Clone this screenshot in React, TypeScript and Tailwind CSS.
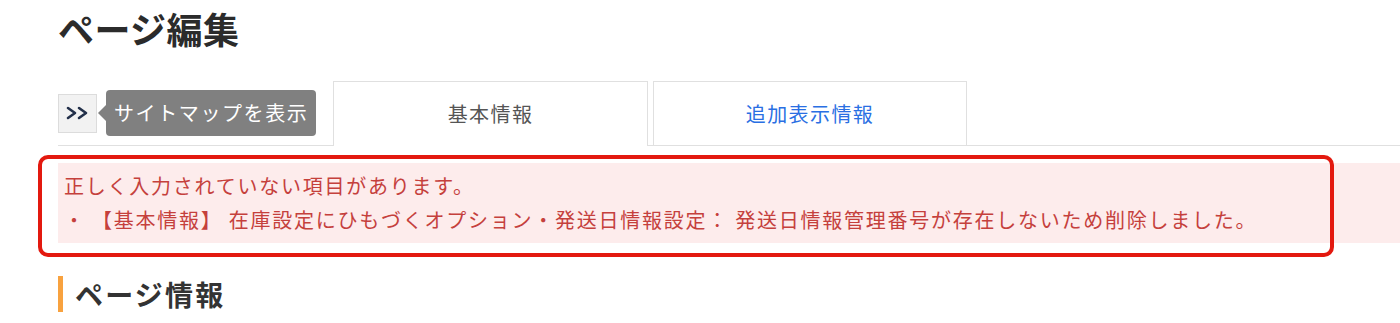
import React from "react";

export default function App() {
  return (
    <div className="relative w-[1400px] h-[323px] overflow-hidden bg-white font-['Noto_Sans_CJK_JP','Noto_Sans',sans-serif]">
      <div className="pl-[58px]">
        <h1 className="pt-[10px] text-[36px] leading-[36px] font-bold text-[#2b2b2b] tracking-[0.4px]">
          ページ編集
        </h1>

        <div className="mt-[35px] flex items-end border-b border-[#e0e0e0] h-[65px]">
          <div className="w-[275px] self-center flex items-center">
            <div className="w-[39px] h-[39px] bg-[#f2f2f2] border border-[#dcdcdc] flex items-center justify-center">
              <svg width="24" height="14" viewBox="0 0 24 14" fill="none">
                <polyline points="2,2 9,7 2,12" stroke="#23304a" strokeWidth="2.6" strokeLinecap="round" strokeLinejoin="round" />
                <polyline points="13,2 20,7 13,12" stroke="#23304a" strokeWidth="2.6" strokeLinecap="round" strokeLinejoin="round" />
              </svg>
            </div>
            <div className="relative ml-[9px] h-[46px] w-[210px] rounded-[4px] bg-[#808080] flex items-center pl-[8px]">
              <span className="absolute left-[-8px] top-1/2 -translate-y-1/2 w-0 h-0 border-y-[8px] border-y-transparent border-r-[8px] border-r-[#808080]" />
              <span className="text-[20px] leading-[24px] text-white tracking-[1.6px] whitespace-nowrap">
                サイトマップを表示
              </span>
            </div>
          </div>
          <div className="w-[315px] h-[65px] -mb-px bg-white border-t border-x border-[#e0e0e0] flex items-center justify-center">
            <span className="text-[20px] leading-[24px] text-[#555] tracking-[1.4px]">基本情報</span>
          </div>
          <div className="ml-[5px] w-[314px] h-[65px] -mb-px bg-white border border-[#e0e0e0] flex items-center justify-center">
            <span className="text-[20px] leading-[24px] text-[#2a6fe3] tracking-[1.4px]">追加表示情報</span>
          </div>
        </div>

        <div className="mt-[17px] h-[80px] bg-[#fdecec] pt-[6px] pl-[6px] text-[20px] leading-[34px] text-[#c5403c] tracking-[1.75px] whitespace-nowrap">
          <p>正しく入力されていない項目があります。</p>
          <p>・ 【基本情報】 在庫設定にひもづくオプション・発送日情報設定： 発送日情報管理番号が存在しないため削除しました。</p>
        </div>

        <div className="mt-[33px] flex items-center">
          <div className="w-[5px] h-[36px] bg-[#f8a23f]" />
          <h2 className="ml-[12px] text-[28px] leading-[36px] font-bold text-[#333] tracking-[2.2px]">ページ情報</h2>
        </div>
      </div>

      <div className="absolute left-[38px] top-[155px] w-[1296px] h-[102px] border-[4px] border-[#e3190f] rounded-[10px] pointer-events-none" />
    </div>
  );
}
